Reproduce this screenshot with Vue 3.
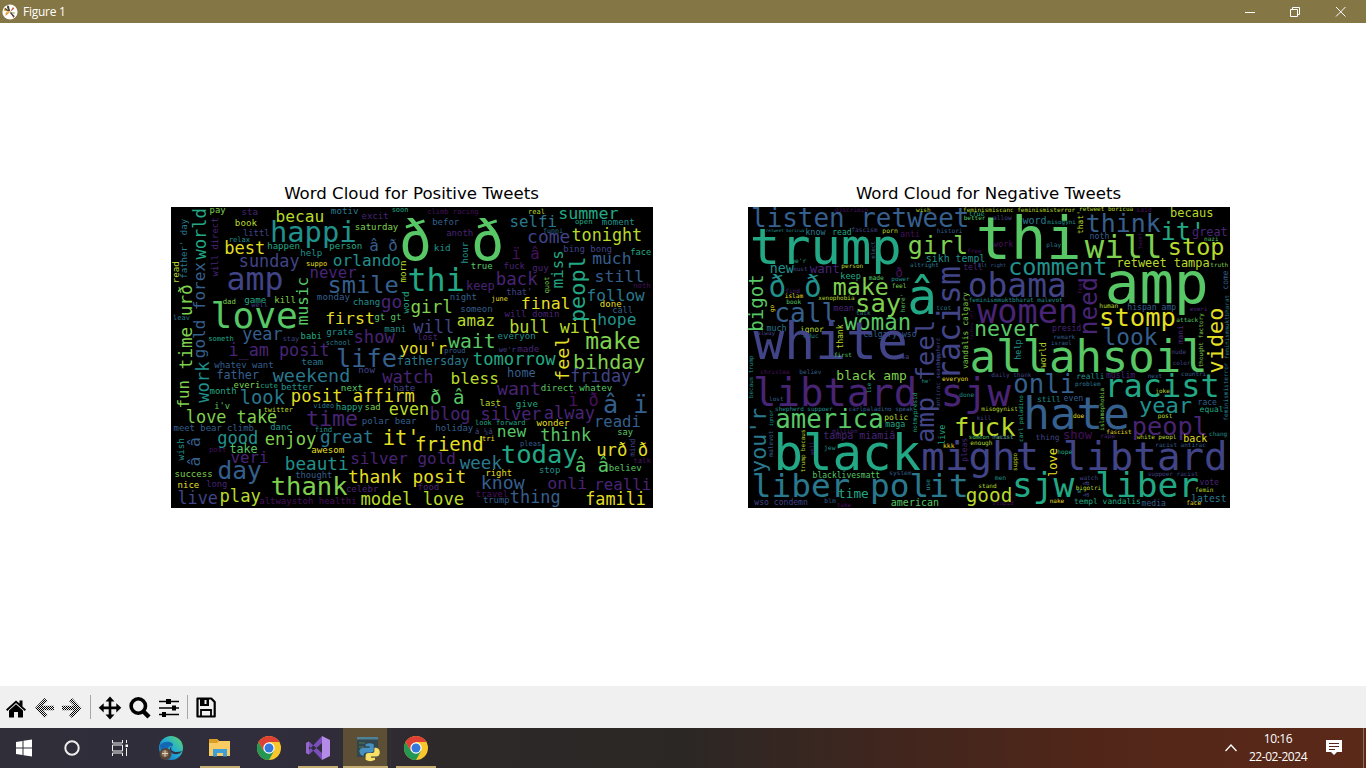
<script setup>
const palette = ['#46105c', '#482475', '#414487', '#355f8d', '#2a788e', '#21918c', '#22a884', '#58c765', '#7fd04f', '#b8da2b', '#e3df22']

// Each word: text, left, baseline, right, palette index.
// Vertical words: text, baseline x, bottom, top, palette index, 1.
const positive = [
  [0, 0, [
    ['pay', 117, 23, 163, 8], ['sta', 213, 30, 260, 1], ['becau', 316, 52, 458, 9], ['motiv', 481, 28, 562, 4], ['excit', 573, 43, 652, 1], ['soon', 663, 21, 712, 6],
    ['book', 193, 62, 257, 9], ['littl', 217, 92, 295, 2], ['happi', 301, 110, 554, 5], ['saturday', 553, 76, 681, 8], ['relax', 174, 112, 237, 5],
    ['best', 162, 146, 281, 10], ['happen', 290, 132, 386, 6], ['person', 476, 133, 573, 6], ['â ð', 597, 138, 679, 3], ['help', 389, 154, 453, 5],
    ['sunday', 206, 186, 384, 2], ['suppo', 406, 183, 468, 10], ['orlando', 488, 184, 688, 5], ['never', 418, 218, 555, 1], ['amp', 171, 256, 334, 2],
    ['smile', 473, 264, 681, 3], ['monday', 439, 284, 536, 3], ['chang', 547, 299, 627, 5], ['go', 632, 309, 692, 1], ['dad', 156, 298, 194, 8],
    ['game', 221, 293, 285, 6], ['well', 242, 305, 290, 2], ['kill', 311, 295, 374, 8], ['love', 124, 369, 377, 7], ['first', 465, 356, 610, 10],
    ['gt gt', 611, 346, 691, 7], ['year', 216, 405, 333, 3], ['stay', 336, 407, 384, 2], ['babi', 390, 403, 452, 6], ['grate', 467, 390, 547, 5],
    ['show', 550, 413, 670, 1], ['mani', 641, 381, 705, 5], ['someth', 113, 408, 188, 6], ['school', 465, 419, 539, 4], ['i_am posit', 175, 453, 474, 1],
    ['life', 499, 487, 675, 3], ['leav', 7, 345, 56, 4],
    ["father' day", 47, 220, 42, 4, 1], ['world', 106, 161, 11, 6, 1], ['will direct', 142, 213, 38, 1, 1], ['read', 24, 234, 169, 9, 1], ['time urð', 62, 490, 240, 8, 1],
    ['gold forex', 103, 457, 173, 3, 1], ['music', 412, 358, 217, 7, 1], ['morn', 706, 231, 167, 9, 1], ['word', 715, 324, 260, 6, 1]
  ]],
  [720, 0, [
    ['ð', -28, 166, 57, 7], ['climb racing', 50, 28, 202, 0], ['befor', 65, 61, 144, 3], ['anoth', 107, 94, 186, 1], ['kid', 70, 139, 118, 5], ['ð', 188, 166, 274, 7],
    ['real', 352, 26, 401, 9], ['selfi', 298, 67, 436, 4], ['summer', 444, 41, 621, 6], ['open', 493, 58, 544, 6], ['moment', 574, 60, 670, 5],
    ['funni', 397, 84, 455, 4], ['come', 351, 115, 476, 2], ['tonight', 484, 107, 692, 9], ['bing bong', 458, 141, 602, 2], ['face', 659, 150, 720, 6],
    ['ï â', 304, 163, 384, 0], ['true', 181, 191, 244, 7], ['fuck', 279, 193, 341, 1], ['guy', 365, 198, 412, 1], ['much', 546, 177, 660, 3], ['thi', -6, 258, 158, 6],
    ['keep', 167, 254, 250, 1], ['back', 257, 239, 378, 1], ["that'", 287, 271, 363, 2], ['still', 553, 230, 698, 3], ['noth', 668, 249, 718, 0],
    ['night', 118, 284, 197, 3], ['june', 242, 288, 290, 10], ['follow', 529, 287, 700, 4], ['girl', 1, 324, 124, 8], ['someon', 149, 321, 244, 3],
    ['final', 332, 313, 477, 10], ['done', 568, 307, 631, 10], ['call', 605, 325, 665, 3], ['will domin', 282, 335, 445, 1], ['hope', 561, 359, 675, 5],
    ['will', 9, 384, 128, 2], ['amaz', 140, 363, 251, 9], ['bull will', 297, 383, 566, 9], ['lost', 20, 406, 80, 1], ['wait', 114, 429, 252, 7],
    ['everyon', 261, 403, 373, 5], ['make', 526, 432, 687, 8], ["you'r", -32, 446, 106, 10], ['proud', 101, 443, 163, 3], ["we'r", 264, 440, 314, 2],
    ['made', 320, 441, 384, 1], ['hour', 172, 174, 111, 5, 1], ['quot', 415, 264, 215, 8, 1], ['miss', 455, 247, 137, 6, 1], ['peopl', 523, 348, 156, 6, 1],
    ['feel', 475, 525, 396, 10, 1]
  ]],
  [0, 453, [
    ['whatev want', 131, 37, 307, 3], ['team', 393, 27, 456, 4], ['now', 563, 52, 611, 2], ['father', 138, 69, 263, 3], ['weekend', 308, 79, 536, 4],
    ['watch', 636, 80, 786, 1], ['month', 117, 113, 196, 6], ['everi', 189, 95, 267, 8], ['cute', 269, 96, 320, 6], ['better', 331, 103, 426, 5],
    ['next', 511, 104, 575, 7], ['hate', 668, 104, 732, 2], ['look', 209, 145, 340, 4], ['posit affirm', 362, 137, 730, 10], ["i'v", 131, 160, 176, 7],
    ['twitter', 279, 167, 365, 9], ['video', 428, 157, 489, 4], ['happy', 496, 163, 575, 6], ['sad', 582, 163, 628, 8], ['even', 656, 178, 773, 9],
    ['love take', 47, 202, 317, 8], ['time', 408, 209, 559, 1], ['polar bear', 574, 204, 736, 3], ['meet bear climb', 9, 225, 248, 3], ['danc', 299, 223, 361, 5],
    ['find', 432, 228, 483, 5], ['good', 141, 264, 260, 5], ['enjoy', 284, 266, 434, 8], ['great', 450, 262, 606, 4], ["it'", 638, 267, 744, 10],
    ['post', 115, 289, 165, 0], ['take', 177, 290, 259, 7], ['awesom', 422, 290, 519, 10], ['veri', 181, 321, 291, 1], ['silver gold', 540, 324, 853, 1],
    ['beauti', 344, 341, 531, 5], ['day', 143, 370, 270, 3], ['success', 12, 362, 124, 8], ['thought', 374, 365, 483, 3], ['thank posit', 534, 380, 884, 10],
    ['nice', 21, 397, 84, 10], ['long', 107, 392, 168, 1], ['thank', 303, 418, 527, 8], ['celebr', 526, 409, 621, 1], ['live', 22, 445, 139, 2],
    ['play', 148, 437, 268, 9], ['altwaystoh healthi', 266, 443, 556, 0], ['model love', 571, 447, 878, 9],
    ['work', 113, 138, 18, 5, 1], ['fun', 54, 155, 74, 8, 1], ['â â', 87, 329, 245, 3, 1], ['wish', 39, 312, 247, 5, 1]
  ]],
  [720, 453, [
    ['fathersday', -41, 27, 172, 4], ['tomorrow', 188, 28, 432, 6], ['bihday', 489, 39, 701, 8], ['bless', 121, 84, 262, 9], ['home', 290, 62, 373, 3],
    ['friday', 480, 77, 659, 2], ['want', 261, 118, 388, 1], ['direct whatev', 391, 106, 603, 7], ['ð â', 60, 145, 159, 7], ['last', 207, 151, 269, 9],
    ['give', 316, 154, 380, 6], ['ï ð', 474, 151, 562, 0], ['â ï', 580, 171, 710, 3], ['blog silver', 59, 193, 390, 1], ['alway', 401, 189, 550, 1],
    ['readi', 551, 213, 688, 3], ['look forward', 193, 208, 343, 6], ['wonder', 378, 209, 475, 10], ['holiday', 74, 226, 186, 3], ['â ¼â', 193, 234, 244, 2],
    ['new', 260, 242, 344, 7], ['think', 390, 254, 539, 7], ['say', 620, 236, 665, 7], ['friend', 15, 285, 216, 10], ['tri', 214, 256, 251, 10],
    ['pleas', 328, 270, 390, 3], ['urð ð', 558, 300, 710, 10], ['today', 273, 321, 498, 6], ['talk', 668, 322, 719, 0], ['week', 149, 338, 271, 4],
    ['â â', 495, 348, 592, 7], ['stop', 385, 350, 447, 5], ['believ', 595, 344, 691, 7], ['right', 225, 360, 302, 10], ['know', 212, 400, 339, 3],
    ['onli', 411, 399, 527, 1], ['realli', 552, 402, 719, 1], ['food', 21, 402, 84, 1], ['travel', 195, 423, 291, 0], ['trump', 217, 442, 295, 3],
    ['thing', 299, 440, 447, 3], ['famili', 525, 448, 703, 10], ['mind', 673, 301, 248, 2, 1]
  ]]
]

const negative = [
  [0, 0, [
    ['discrimin', 265, 20, 363, 0], ['wish', 508, 20, 550, 9], ['feminismiscanc feminismisterror', 649, 20, 984, 9], ['listen retweet', 16, 66, 665, 3], ['true', 666, 32, 712, 6],
    ['better', 651, 45, 715, 7], ['retweet boricua', 57, 82, 172, 5], ['know', 176, 89, 235, 4], ['read', 257, 89, 313, 6], ['fascism', 314, 82, 391, 2],
    ['porn', 407, 84, 452, 9], ['anti', 460, 96, 518, 0], ['histori', 570, 85, 646, 3], ['trump', 16, 178, 459, 6], ['girl', 486, 147, 661, 8],
    ['free', 661, 143, 703, 0], ['sikh templ', 538, 170, 714, 5], ["we'r", 134, 173, 177, 6], ['altright', 490, 185, 575, 4], ['tell', 650, 196, 706, 1],
    ['new', 70, 205, 139, 5], ['must', 139, 199, 181, 2], ['want', 190, 205, 277, 1], ['person', 284, 190, 348, 9],
    ['keep', 281, 221, 341, 6], ['made', 366, 226, 410, 7], ['ð', 447, 216, 467, 0], ['power', 434, 229, 487, 5], ['feel', 435, 249, 478, 8],
    ['ð ð', 69, 276, 221, 5], ['make', 261, 270, 423, 8], ['â', 488, 328, 565, 6], ['find', 116, 263, 158, 1], ['islam', 114, 280, 168, 10],
    ['xenophobia', 215, 284, 322, 9], ['book', 119, 298, 162, 7], ['say', 328, 320, 460, 8], ['call', 86, 350, 268, 3], ['mean', 260, 317, 320, 1],
    ['talk', 328, 331, 370, 4], ['tcot', 569, 315, 612, 4], ['woman', 294, 375, 490, 7], ['much', 60, 377, 118, 4], ['ignor', 160, 380, 230, 9],
    ['alway', 31, 390, 84, 2], ['educ', 170, 398, 215, 5], ['calgary wso', 350, 396, 508, 3], ['white', 27, 461, 477, 2], ['first', 262, 456, 314, 7],
    ['usa', 452, 462, 486, 2], ['obama', 667, 276, 956, 2], ['feminismmuktbharat malevot', 666, 292, 947, 5], ['women', 695, 353, 990, 1],
    ['never', 684, 392, 875, 7], ['allahsoil', 674, 500, 1378, 7], ['bigot', 49, 377, 210, 7, 1], ['elect', 384, 160, 109, 3, 1], ["here'", 473, 320, 267, 7, 1],
    ['go', 81, 320, 300, 10, 1], ['thank', 289, 430, 359, 9, 1], ['amp feel', 560, 710, 347, 2, 1], ['racism', 640, 520, 186, 2, 1], ['vandalis calgary', 662, 491, 262, 8, 1],
    ['shepherd', 580, 479, 400, 2, 1], ['factory left', 679, 403, 316, 0, 1]
  ]],
  [723, 0, [
    ['retweet boricua', 274, 19, 435, 9], ['said', 446, 20, 490, 0], ['becaus', 548, 36, 675, 9], ['allow', 16, 45, 71, 2], ['word', 105, 58, 175, 4],
    ['misogyni', 179, 57, 263, 5], ['think', 297, 80, 516, 3], ["it'", 522, 104, 650, 6], ['great', 614, 94, 718, 1], ['nazi', 649, 109, 691, 7],
    ['thi', -28, 161, 275, 7], ['noth', 306, 102, 364, 3], ['will', 295, 159, 520, 8], ['stop', 543, 150, 707, 9], ['work', 17, 125, 75, 0],
    ['play', 176, 125, 219, 4], ['alt right', -30, 187, 54, 3], ['comment', 64, 210, 356, 5], ['retweet tampa', 387, 185, 664, 9], ['truth', 668, 185, 720, 8],
    ['amp', 359, 295, 656, 7], ['human', 335, 308, 390, 9], ['hispan amp', 419, 314, 564, 3], ['everi', 606, 317, 658, 1], ['stomp', 337, 363, 561, 10],
    ['attack', 566, 352, 630, 7], ['presid', 193, 378, 279, 1], ['look', 347, 419, 506, 3], ['remark', 197, 402, 261, 3], ['israel', 190, 420, 251, 3],
    ['nude', 551, 446, 594, 2], ["that'", 286, 86, 17, 9, 1], ['tweet', 462, 132, 84, 0, 1], ['fear', 283, 266, 225, 0, 1], ['need', 328, 387, 218, 1, 1],
    ['come', 720, 252, 197, 3, 1], ['help', 99, 463, 404, 5, 1], ['world', 175, 486, 412, 9, 1], ['mani', 586, 416, 362, 1, 1],
    ['thought factory', 644, 486, 325, 8, 1], ['video', 706, 502, 310, 10, 1], ['feminismmuktbharat', 722, 461, 270, 4, 1]
  ]],
  [0, 453, [
    ['christma', 41, 53, 127, 0], ['believ', 158, 54, 223, 3], ['black amp', 270, 71, 478, 8], ['everyon', 586, 76, 663, 10], ["he'", 525, 81, 553, 5],
    ['libtard sjw', 24, 149, 788, 1], ['lost', 67, 134, 109, 3], ['done', 638, 123, 681, 5], ['shepherd suppoer', 85, 166, 256, 5], ['carlpaladino speak', 306, 165, 498, 3],
    ['america', 89, 216, 408, 7], ['polic', 413, 192, 483, 9], ['maga', 416, 213, 474, 6], ['misogynist', 704, 164, 812, 9], ['fuck', 625, 239, 803, 9],
    ['kill', 690, 191, 732, 2], ['million', 257, 231, 331, 1], ['tampa miamiâ', 230, 250, 444, 1], ['black', 87, 343, 517, 6], ['jew', 232, 282, 265, 5],
    ['might libtard', 529, 343, 1438, 2], ['someon racist', 666, 248, 799, 7], ['enough', 671, 267, 736, 9], ['kkk', 589, 276, 622, 10],
    ['blacklivesmatt', 198, 367, 399, 7], ['system', 428, 356, 493, 3], ['liber polit', 19, 424, 662, 4], ['time', 275, 425, 364, 6],
    ['wso condemn', 23, 447, 182, 2], ['blm', 233, 441, 266, 3], ['take', 270, 452, 312, 0], ['american', 433, 449, 575, 7], ['stand', 695, 395, 748, 9], ['good', 659, 437, 794, 9],
    ['becaus trump', 18, 125, -1, 5, 1], ["you'r", 57, 347, 158, 4, 1], ['ignor', 77, 211, 162, 5, 1], ['malevot', 77, 301, 224, 3, 1], ['trump becaus', 173, 348, 221, 9, 1],
    ['well', 200, 297, 256, 1, 1], ['lie', 373, 111, 81, 6, 1], ['notmypresid', 510, 228, 110, 6, 1], ['antirac seashep', 578, 151, -4, 2, 1],
    ['live', 595, 265, 207, 6, 1], ['pleas', 660, 316, 246, 1, 1], ['use', 548, 402, 370, 5, 1]
  ]],
  [723, 453, [
    ['daily thank', 11, 63, 130, 2], ['color', 555, 28, 607, 2], ['onli', 80, 110, 259, 3], ['realli', 266, 70, 349, 5], ['muslim', 355, 67, 441, 1],
    ['next', 480, 67, 522, 3], ['countri', 580, 61, 654, 3], ['problem', 262, 90, 337, 4], ['racist', 354, 124, 692, 6], ['joke', 503, 111, 545, 9],
    ['still', 148, 139, 218, 5], ['even', 228, 135, 285, 3], ['hate', 112, 218, 421, 3], ['year', 456, 170, 610, 5], ['race', 630, 146, 686, 3],
    ['equal', 636, 167, 706, 6], ['doe', 256, 185, 288, 10], ['post', 510, 186, 553, 9], ['peopl', 435, 236, 657, 1], ['resist', 11, 250, 76, 2],
    ['thing', 144, 253, 214, 2], ['show', 227, 248, 311, 0], ['rape', 338, 246, 381, 1], ['fascist', 356, 233, 430, 10], ['white peopl', 447, 249, 565, 9],
    ['back', 587, 259, 657, 10], ['chang', 664, 239, 717, 5], ['racist antirac', 503, 272, 653, 3], ['hope', 209, 294, 252, 6], ['men', 21, 371, 54, 5],
    ['watch', 276, 371, 330, 2], ['suppoer racist', 480, 359, 630, 2], ['sjw liber', 77, 424, 630, 6], ['bigotri', 264, 403, 339, 9], ['vote', 636, 386, 692, 1],
    ['femin', 622, 407, 676, 9], ['latest', 611, 437, 715, 4], ['nake', 186, 441, 228, 10], ['templ vandalis', 259, 445, 458, 6], ['media', 462, 449, 533, 3],
    ['face', 596, 448, 639, 10], ['stupid', 14, 448, 76, 0], ['carl paladino', 104, 257, 118, 6, 1], ['islamophobia', 348, 223, 96, 8, 1], ['suppo', 88, 344, 291, 9, 1],
    ['love', 207, 361, 277, 10, 1], ['feminismisterror', 721, 193, 20, 4, 1], ['w', 269, 411, 279, 5], ['â', 304, 388, 376, 2, 1], ['â', 304, 423, 412, 2, 1]
  ]]
]

const layout = (groups) => groups.flatMap(([dx, dy, words]) => words.map(([text, a, b, c, color, vertical]) => {
  const span = vertical ? b - c : c - a
  const size = span / ((text.length - 0.14) * 0.602)
  const inset = size * 0.05
  return {
    text,
    size: size.toFixed(2),
    fill: palette[color],
    at: vertical
      ? `translate(${a + dx} ${(b + dy + inset).toFixed(1)}) rotate(-90)`
      : `translate(${(a + dx - inset).toFixed(1)} ${b + dy})`
  }
}))

const clouds = [
  { title: 'Word Cloud for Positive Tweets', cls: 'positive', box: '0 6 1446 903', words: layout(positive) },
  { title: 'Word Cloud for Negative Tweets', cls: 'negative', box: '3 6 1446 903', words: layout(negative) }
]
</script>

<template>
  <div class="window">
    <header class="titlebar">
      <svg class="app-icon" width="16" height="16" viewBox="0 0 16 16">
        <circle cx="8" cy="8" r="7.6" fill="#fff" />
        <path d="M8 8 1.500 6.500 3 3.500z" fill="#e0a82e" />
        <path d="M8 8 4.500 1.200 7 2z" fill="#4d4433" />
        <path d="m8 8-4.500 4 .2-3.500z" fill="#e39b29" />
        <path d="m8 8 3.500 6 1.200-1.500z" fill="#c65b38" />
        <path d="m8 8 3-5 1.200 1.800z" fill="#c8553a" />
        <path d="m8 8 5 .5-.5 1.500z" fill="#9eab55" />
        <path d="m3 4.500 3.500 2.500M5.500 3l2 4M8.500 8.500l3.500 4" stroke="#49463e" fill="none" stroke-width="1.400" />
      </svg>
      <span>Figure 1</span>
      <div class="controls">
        <svg viewBox="0 0 46 22"><path d="M15 11.500h10" /></svg>
        <svg viewBox="0 0 46 22"><path d="M14.500 8.500h7v7h-7zM16.500 8V6.500h7v7H22" /></svg>
        <svg viewBox="0 0 46 22"><path d="m14 6 9.500 9.500m0-9.500L14 15.500" /></svg>
      </div>
    </header>

    <main class="figure">
      <section v-for="c in clouds" :key="c.cls" class="plot" :class="c.cls">
        <h2>{{ c.title }}</h2>
        <svg class="cloud" width="482" height="301" :viewBox="c.box">
          <text v-for="(w, i) in c.words" :key="i" :transform="w.at" :font-size="w.size" :fill="w.fill">{{ w.text }}</text>
        </svg>
      </section>
    </main>

    <nav class="toolbar">
      <svg width="230" height="42" viewBox="0 0 230 42">
        <defs>
          <pattern id="dither" width="2" height="2" patternUnits="userSpaceOnUse">
            <rect width="2" height="2" fill="#efefef" /><rect width="1" height="1" /><rect x="1" y="1" width="1" height="1" />
          </pattern>
        </defs>
        <g transform="translate(0 -.6)">
          <path d="m6 24 10-9 3.500 3V15h3v6l3.500 3-1.200 1.500L16 17.500l-8.700 8z" />
          <path d="m9 25 7-6.200 7 6.200v7h-5v-5.500h-4V32H9z" />
        </g>
        <path d="m35 22 9.500-10 3 3-4.800 4.800H54v4.400H42.700l4.800 4.800-3 3z" fill="url(#dither)" />
        <path d="m81.500 22-9.500-10-3 3 4.800 4.800H62v4.400h11.800L69 29l3 3z" fill="url(#dither)" />
        <path d="M90.500 9v24M187.500 9v24" stroke="#a7a7a7" />
        <path d="m110 10.500 4.500 5h-3.200v4.900h5v-3.200l5 4.600-5 4.600v-3.200h-5v5.200h3.200l-4.500 5-4.500-5h3.200v-5.200h-5v3.200l-5-4.600 5-4.600v3.200h5v-4.900h-3.200z" />
        <circle cx="138.300" cy="20" r="7.200" fill="none" stroke="#000" stroke-width="3.600" />
        <path d="m143 25 6 6" stroke="#000" stroke-width="4.500" />
        <path d="M159 15.500h20M159 22h20M159 28.500h20" stroke="#000" stroke-width="1.700" />
        <path d="M166 13h5v5h-5zm6 6.500h4v5h-4zM162 26h4v5h-4z" />
        <path d="M197.500 12.500h13.700l3.500 3.500v14.500h-17.200z" fill="none" stroke="#000" stroke-width="2.200" stroke-linejoin="round" />
        <path d="M200 12h9v8h-9z" /><path d="M204.500 14h2v4h-2z" fill="#f0f0f0" />
        <path d="M201 30v-6h10v6" fill="none" stroke="#000" stroke-width="1.800" />
      </svg>
    </nav>

    <footer class="taskbar">
      <svg class="apps" width="440" height="40" viewBox="0 0 440 40">
        <defs>
          <linearGradient id="edge" x1="0" y1="1" x2="1" y2="0"><stop stop-color="#126ac1" /><stop offset=".5" stop-color="#21a9d8" /><stop offset="1" stop-color="#62dc62" /></linearGradient>
          <g id="chrome">
            <circle cx="12" cy="12" r="12" fill="#f9c72c" />
            <path d="M1.600 6A12 12 0 0 0 12 24l5-9H7z" fill="#249852" />
            <path d="m1.600 6 5.200 9L12 6h10.400A12 12 0 0 0 1.600 6z" fill="#df4034" />
            <circle cx="12" cy="12" r="5.700" fill="#fff" /><circle cx="12" cy="12" r="4.500" fill="#3379dc" />
          </g>
        </defs>
        <path d="m16 14 6.500-1v6.500H16zm7.500-1.200L32 11.500v8h-8.500zM16 20.500h6.500V27l-6.500-1zm7.500 0H32v8l-8.500-1.200z" fill="#fff" />
        <circle cx="72" cy="20" r="6.700" fill="none" stroke="#eee" stroke-width="2" />
        <path d="M112.500 12v3h10v-3M112.500 28v-3h10v3M112.500 17h10v6h-10zM126.500 12v3m0 5v8" fill="none" stroke="#f0f0f0" />
        <path d="M125.500 16.500h2.500V19h-2.500z" fill="#fff" />
        <circle cx="171" cy="20" r="12" fill="url(#edge)" />
        <path d="M160 17c4-5 14-4 13 1-4-1-7 3-4 7-6 1-9-3-9-8z" fill="#1467b2" />
        <path d="M172 18c-3 4 2 8 10 5-3 5-11 4-12-1-.5-2 .5-3 2-4z" fill="#303143" />
        <circle cx="165.500" cy="26" r="6" fill="#554438" /><circle cx="165" cy="25.500" r="3.500" fill="#8b7059" /><path d="M165 22.500v6M162 25.500h6" stroke="#e2d2bd" fill="none" />
        <path d="M209 11h8l2 2h11v15h-21z" fill="#f8cc62" /><path d="M209 11h8l2 2-2 2h-8z" fill="#dc9d25" />
        <path d="M213 28.500V21h14v7.500h-4V25h-6v3.500z" fill="#3d9ed8" />
        <use href="#chrome" x="257" y="8" />
        <path d="m306 15 3-1.500L322 25v7zM306 25l3 1.500L322 15V8z" fill="#7a4fb9" />
        <path d="M306 15v10l3 1.500V13.500z" fill="#9268cc" />
        <path d="m322 8 8 4v16l-8 4z" fill="#b48ce8" />
        <path d="M343 0h45v40h-45z" fill="#5d4f35" /><path d="M387.500 0v40M390.500 0v40" stroke="#373329" />
        <path d="M357 9h21v20h-21z" fill="#34464d" /><path d="M357 9h21v2.500h-21z" fill="#4f8199" /><path d="M359 15h6m-6 4h5m-5 4h4" stroke="#497d56" />
        <g transform="translate(371 24) scale(1.350) translate(-372 -23.200)">
          <path d="M368 17.500q3-1.500 6 0v4q0 2-2 2h-3q-2.500 0-2.500 2.500h-1q-2-1-2-3 0-3 3-3h4.500v-1h-3z" fill="#4591c2" />
          <path d="M374.500 20h1.500q2.500.8 2.500 3.500t-2.500 3h-4v1h3v1.500q-3.500 2-7 0v-3q0-2 2-2h2.500q2 0 2-2z" fill="#f8df65" />
        </g>
        <use href="#chrome" x="404" y="8" />
        <path d="M200 38h40v2h-40zm98 0h40v2h-40zm45 0h45v2h-45zm53 0h40v2h-40z" fill="#c5ad72" />
      </svg>
      <div class="tray">
        <svg width="14" height="10" viewBox="0 0 14 10"><path d="m1.500 8 5.500-6 5.500 6" fill="none" stroke="#fff" stroke-width="1.300" /></svg>
        <div class="clock"><span>10:16</span><span>22-02-2024</span></div>
        <svg class="notice" width="18" height="18" viewBox="0 0 18 18"><path d="M1 1h16v12h-5l-3 3-3-3H1z" fill="#fff" /><path d="M4 4.500h10M4 7.500h10M4 10.500h6" stroke="#552719" /></svg>
      </div>
    </footer>
  </div>
</template>

<style>
html, body { margin: 0; overflow: hidden; }
</style>

<style scoped>
.window { width: 1366px; height: 768px; display: flex; flex-direction: column; background: #fff; overflow: hidden; font-family: "Open Sans", "Noto Sans", sans-serif; }
.titlebar { height: 23px; flex: none; display: flex; align-items: center; background: #857645; color: #fff; font-size: 12px; }
.app-icon { margin-left: 2px; margin-right: 5px; }
.titlebar span { letter-spacing: -.25px; }
.controls { margin-left: auto; margin-right: -2px; display: flex; height: 22px; padding-bottom: 2px; box-sizing: border-box; }
.controls svg { width: 46px; height: 22px; flex: none; }
.controls path { fill: none; stroke: #fff; stroke-width: 1; }
.figure { height: 663px; flex: none; display: flex; align-items: flex-start; padding: 161px 0 0 171px; box-sizing: border-box; gap: 95px; }
.plot { width: 482px; }
.plot h2 { margin: 0 1px 0 0; height: 23px; line-height: 20px; text-align: center; font-family: "DejaVu Sans", sans-serif; font-size: 16.63px; font-weight: 400; color: #000; white-space: nowrap; }
.cloud { display: block; background: #000; font-family: "DejaVu Sans Mono", monospace; }
.cloud text { white-space: pre; }
.toolbar { height: 42px; flex: none; background: #f0f0f0; }
.toolbar svg { display: block; }
.taskbar { height: 40px; flex: none; display: flex; justify-content: space-between; background: linear-gradient(90deg, #302e38 0, #302d3d 20%, #302c36 27%, #2d2928 33%, #2b2725 50%, #40261e 65%, #512619 80%, #5b2918 100%); }
.tray { width: 140px; box-sizing: border-box; display: flex; align-items: center; color: #fff; margin-right: 2px; border-right: 1px solid #8b6c60; }
.clock { width: 78px; margin-left: 1px; display: flex; flex-direction: column; align-items: center; font-size: 12px; line-height: 18px; letter-spacing: -.45px; }
.notice { margin-left: 8px; }
</style>
